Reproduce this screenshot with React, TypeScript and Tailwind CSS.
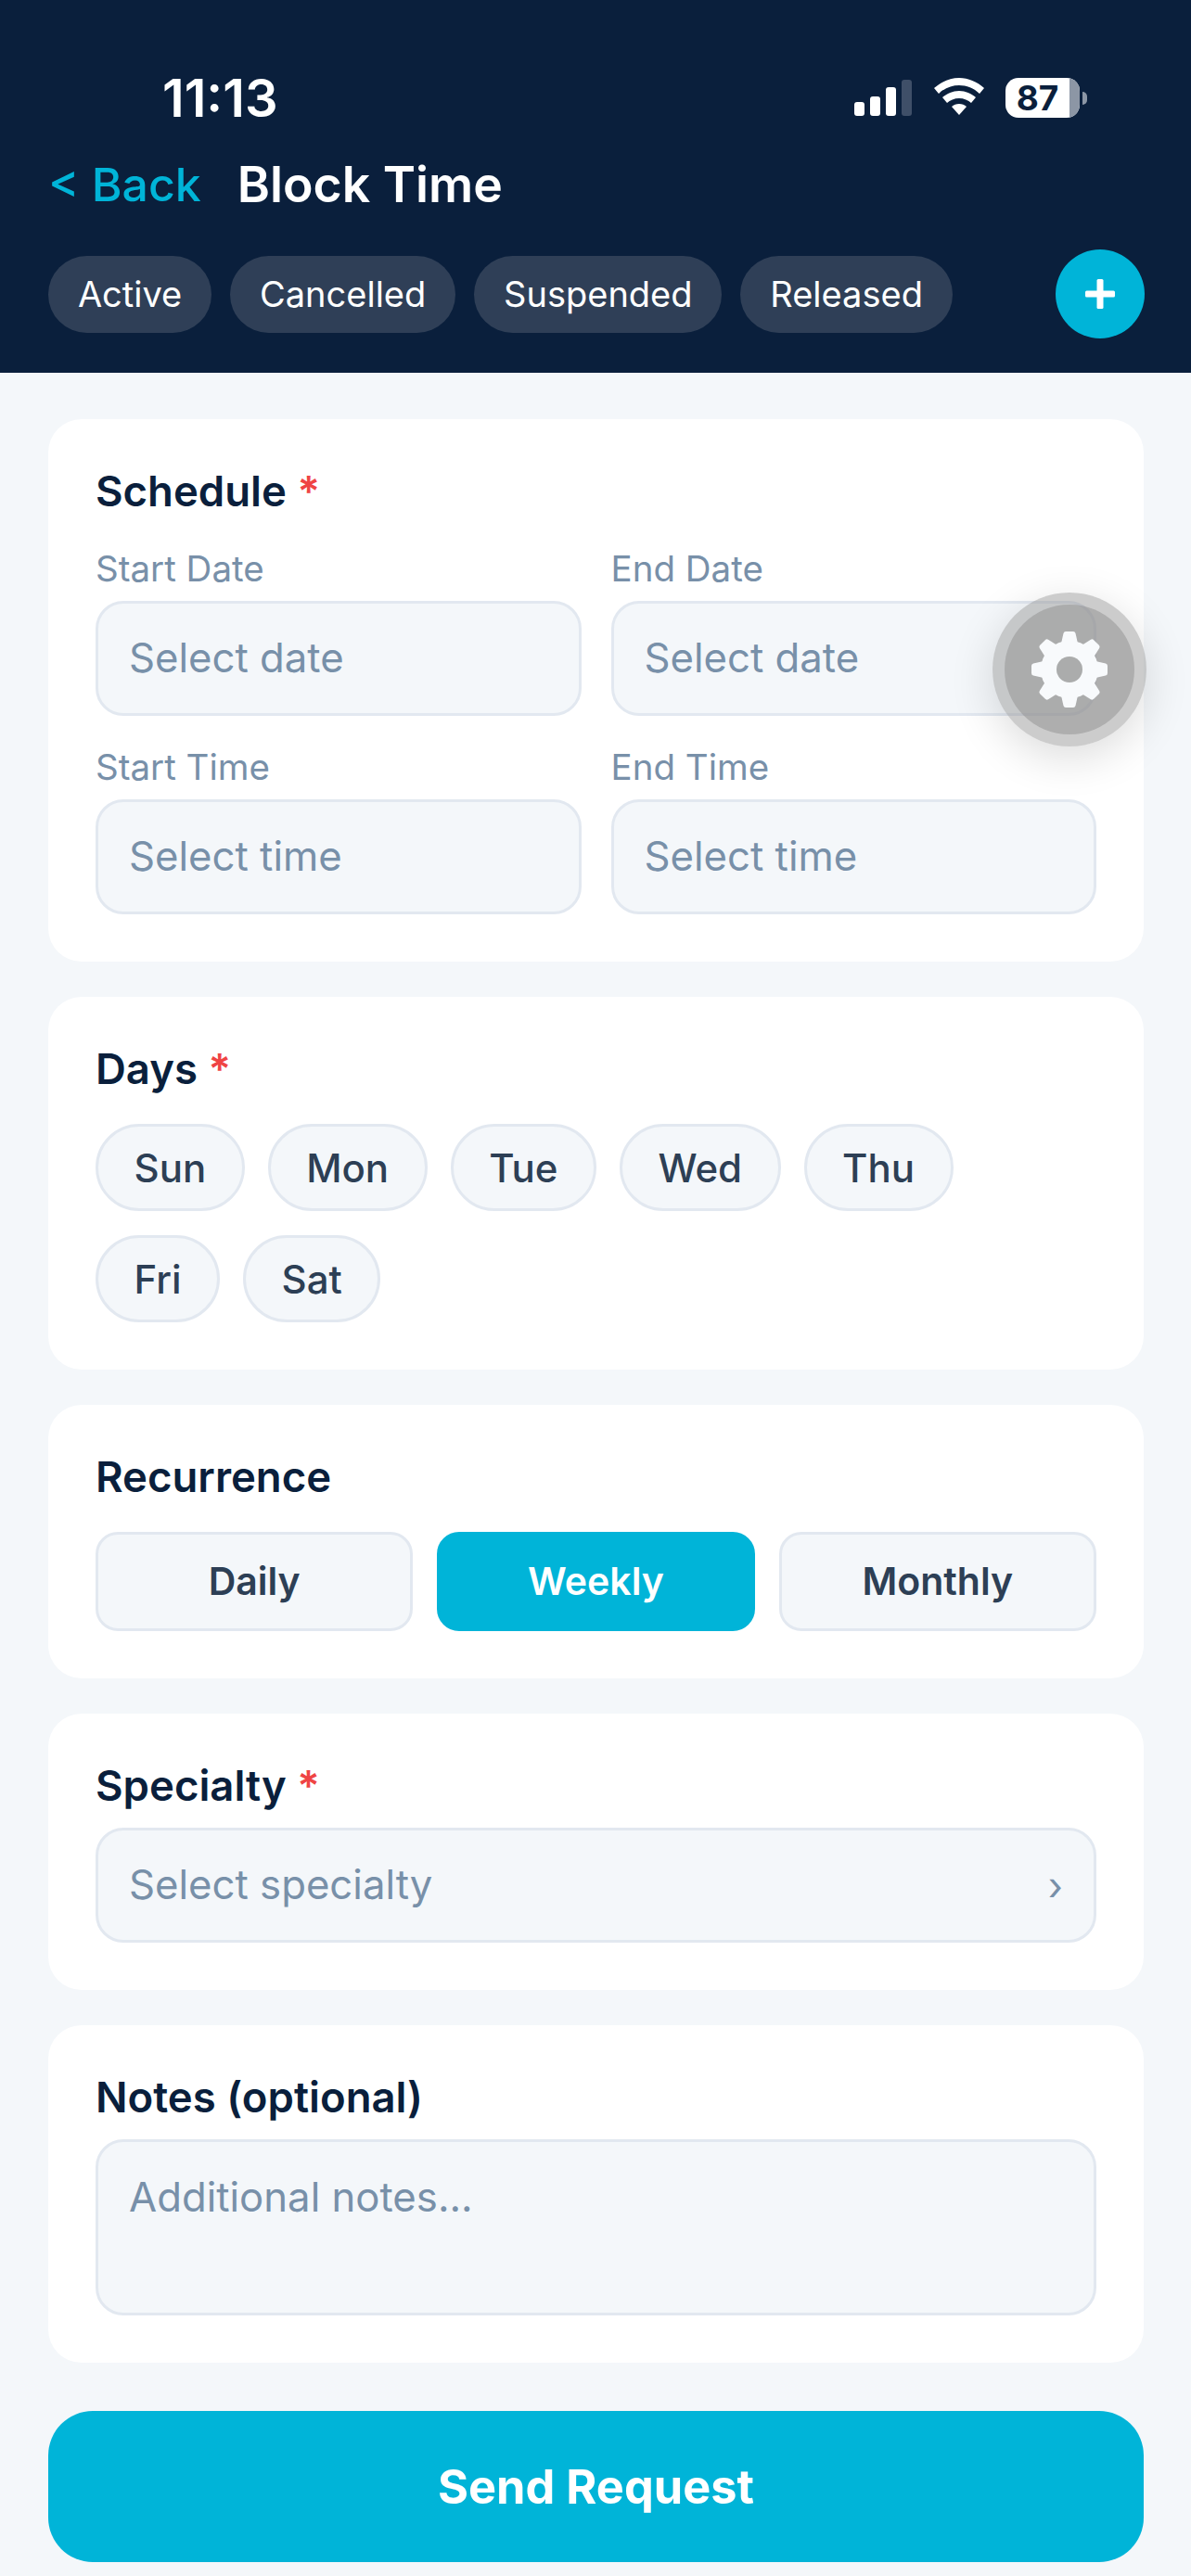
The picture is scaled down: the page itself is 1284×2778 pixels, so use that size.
const DAY_ROWS = [
  ["Sun", "Mon", "Tue", "Wed", "Thu"],
  ["Fri", "Sat"],
];
const FILTERS = ["Active", "Cancelled", "Suspended", "Released"];
const RECURRENCE = ["Daily", "Weekly", "Monthly"];

function StatusBar() {
  return (
    <div className="flex h-[82px] items-start justify-between pl-[175px] pr-[112px]">
      <span className="text-[56px] font-semibold leading-[44px] text-white">11:13</span>
      <div className="flex items-start">
        {/* Signal */}
        <div className="flex h-[41px] items-end gap-[6px]">
          <span className="h-[15px] w-[11px] rounded-[3px] bg-white" />
          <span className="h-[21px] w-[11px] rounded-[3px] bg-white" />
          <span className="h-[31px] w-[11px] rounded-[3px] bg-white" />
          <span className="h-[39px] w-[11px] rounded-[3px] bg-[#3f4f68]" />
        </div>
        {/* Wifi */}
        <svg className="ml-[24px]" width="54" height="41" viewBox="0 0 54 41">
          <path d="M27 0C17 0 8 4 0 11l5 6C11 11 19 8 27 8s16 3 22 9l5-6C46 4 37 0 27 0z" fill="#fff" />
          <path d="M27 14c-7 0-13 3-18 7l5 6c3-3 8-5 13-5s10 2 13 5l5-6c-5-4-11-7-18-7z" fill="#fff" />
          <path d="M27 28c-3 0-6 1-8 3l8 9 8-9c-2-2-5-3-8-3z" fill="#fff" />
        </svg>
        {/* Battery */}
        <div className="ml-[23px] flex items-center">
          <div className="flex h-[43px] w-[80px] overflow-hidden rounded-[14px] bg-white">
            <span className="flex-1 text-center text-[37px] font-bold leading-[43px] text-[#0a1f3c]">87</span>
            <span className="w-[11px] bg-[#8c96a5]" />
          </div>
          <span className="ml-[3px] h-[14px] w-[5px] rounded-r-full bg-[#8c96a5]" />
        </div>
      </div>
    </div>
  );
}

function Header() {
  return (
    <div className="h-[402px] bg-[#0a1f3c] pt-[84px]">
      <StatusBar />
      <div className="mt-[3px] flex items-center pl-[52px]">
        <span className="text-[50px] font-medium leading-[60px] text-[#00b4d8]">{"< Back"}</span>
        <span className="ml-[39px] text-[53.5px] font-semibold leading-[60px] text-white">Block Time</span>
      </div>
      <div className="mt-[40px] flex items-center pl-[52px] pr-[50px]">
        <div className="flex gap-[20px]">
          {FILTERS.map((f) => (
            <span key={f} className="flex h-[83px] items-center rounded-full bg-[#2f3f57] px-[31.9px] text-[38px] text-white">
              {f}
            </span>
          ))}
        </div>
        <button className="ml-auto flex h-[96px] w-[96px] items-center justify-center rounded-full bg-[#00b4d8]">
          <svg width="32" height="32" viewBox="0 0 32 32">
            <rect x="12.5" y="0" width="7" height="32" rx="1.5" fill="#fff" />
            <rect x="0" y="12.5" width="32" height="7" rx="1.5" fill="#fff" />
          </svg>
        </button>
      </div>
    </div>
  );
}

function Card({ title, required, children }: { title: string; required?: boolean; children: React.ReactNode }) {
  return (
    <div className="rounded-[36px] bg-white p-[51px]">
      <div className="text-[45.5px] font-semibold leading-[54px] text-[#0a1f3c]">
        {title}
        {required && <span className="text-[#ef4444]"> *</span>}
      </div>
      {children}
    </div>
  );
}

function Field({ label, value }: { label: string; value: string }) {
  return (
    <div className="flex-1">
      <div className="text-[38.5px] leading-[48px] text-[#7890a9]">{label}</div>
      <div className="mt-[11px] flex h-[124px] items-center rounded-[30px] border-[3px] border-[#e2e8f0] bg-[#f4f7fa] px-[33px] text-[43.7px] text-[#7890a9]">
        {value}
      </div>
    </div>
  );
}

function Gear() {
  const angles = [0, 45, 90, 135, 180, 225, 270, 315];
  return (
    <svg width="84" height="84" viewBox="-42 -42 84 84">
      <defs>
        <mask id="gear-hole">
          <rect x="-42" y="-42" width="84" height="84" fill="#fff" />
          <circle r="14" fill="#000" />
        </mask>
      </defs>
      <g fill="#f8fafc" mask="url(#gear-hole)">
        <circle r="31" />
        {angles.map((a) => (
          <path key={a} d="M-9-28 L-6.5-39 Q-6-41-4-41 L4-41 Q6-41 6.5-39 L9-28 Z" transform={`rotate(${a})`} />
        ))}
      </g>
    </svg>
  );
}

export default function App() {
  return (
    <div className="relative h-[2778px] w-[1284px] overflow-hidden bg-[#f4f7fa] font-['Inter',sans-serif]">
      <Header />
      <div className="flex flex-col gap-[38px] pl-[52px] pr-[51px] pt-[50px]">
        <Card title="Schedule" required>
          <div className="mt-[32px] flex gap-[32px]">
            <Field label="Start Date" value="Select date" />
            <Field label="End Date" value="Select date" />
          </div>
          <div className="mt-[31px] flex gap-[32px]">
            <Field label="Start Time" value="Select time" />
            <Field label="End Time" value="Select time" />
          </div>
        </Card>

        <Card title="Days" required>
          <div className="mt-[32px] flex flex-col gap-[26px]">
            {DAY_ROWS.map((row) => (
              <div key={row[0]} className="flex gap-[25px]">
                {row.map((d) => (
                  <span key={d} className="flex h-[94px] items-center rounded-full border-[3px] border-[#e2e8f0] bg-[#f4f7fa] px-[38.5px] text-[42px] font-medium text-[#2d3f55]">
                    {d}
                  </span>
                ))}
              </div>
            ))}
          </div>
        </Card>

        <Card title="Recurrence">
          <div className="mt-[32px] flex gap-[26px]">
            {RECURRENCE.map((r) => (
              <span
                key={r}
                className={
                  r === "Weekly"
                    ? "flex h-[107px] flex-1 items-center justify-center rounded-[24px] border-[3px] border-[#00b4d8] bg-[#00b4d8] text-[41px] font-semibold text-white"
                    : "flex h-[107px] flex-1 items-center justify-center rounded-[24px] border-[3px] border-[#e2e8f0] bg-[#f4f7fa] text-[41px] font-semibold text-[#2d3f55]"
                }
              >
                {r}
              </span>
            ))}
          </div>
        </Card>

        <Card title="Specialty" required>
          <div className="mt-[18px] flex h-[124px] items-center justify-between rounded-[30px] border-[3px] border-[#e2e8f0] bg-[#f4f7fa] px-[33px] text-[43.7px] text-[#7890a9]">
            <span>Select specialty</span>
            <span className="text-[42px]">›</span>
          </div>
        </Card>

        <Card title="Notes (optional)">
          <div className="mt-[18px] h-[190px] rounded-[30px] border-[3px] border-[#e2e8f0] bg-[#f4f7fa] px-[33px] pt-[33px] text-[43.7px] leading-[54px] text-[#7890a9]">
            Additional notes...
          </div>
        </Card>

        <button className="mt-[14px] h-[163px] rounded-[48px] bg-[#00b4d8] text-[50.5px] font-bold text-white">
          Send Request
        </button>
      </div>

      {/* Floating settings button */}
      <div className="absolute left-[1070px] top-[639px] flex h-[166px] w-[166px] items-center justify-center rounded-full bg-[#8f8f8f]/45 shadow-[0_12px_48px_rgba(0,0,0,0.14)]">
        <div className="flex h-[140px] w-[140px] items-center justify-center rounded-full bg-[#8f8f8f]/50">
          <Gear />
        </div>
      </div>
    </div>
  );
}
